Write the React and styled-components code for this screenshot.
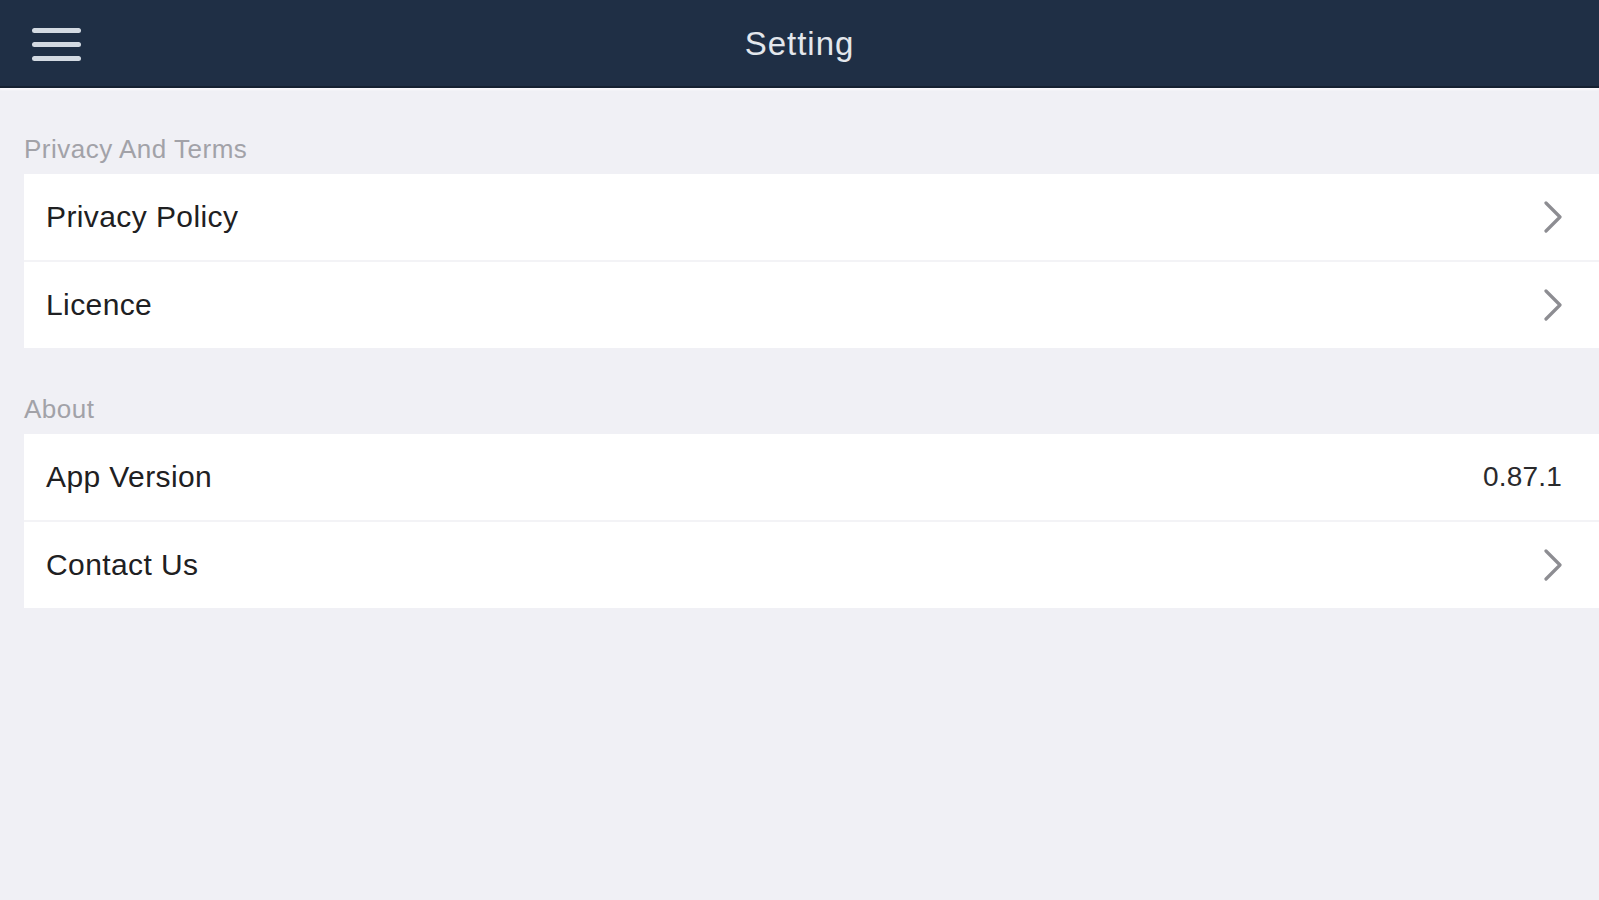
import React from "react";
import styled, { createGlobalStyle } from "styled-components";

const Global = createGlobalStyle`
  html, body { margin: 0; padding: 0; background: #f0f0f5; }
  body { font-family: "Liberation Sans", Arial, sans-serif; }
  #root { min-height: 100vh; background: #f0f0f5; }
`;

const Page = styled.div`
  width: 100%;
  min-height: 100vh;
  background: #f0f0f5;
`;

const Header = styled.header`
  height: 86px;
  background: #1f2f45;
  border-bottom: 2px solid #152131;
  box-shadow: 0 2px 2px rgba(255, 255, 255, 0.6);
  display: grid;
  grid-template-columns: 120px 1fr 120px;
  align-items: center;
`;

const MenuButton = styled.button`
  background: none;
  border: none;
  padding: 0 0 0 32px;
  margin: 0;
  display: flex;
  flex-direction: column;
  gap: 9px;
  width: 82px;
  cursor: pointer;
  margin-top: 2px;
`;

const MenuLine = styled.span`
  display: block;
  width: 49px;
  height: 5px;
  border-radius: 3px;
  background: #d3dae2;
`;

const Title = styled.h1`
  margin: 0;
  text-align: center;
  color: #e3e7ec;
  font-size: 33px;
  font-weight: 400;
  letter-spacing: 1px;
  margin-top: 2px;
`;

const SectionTitle = styled.div`
  height: 86px;
  box-sizing: border-box;
  display: flex;
  align-items: flex-end;
  padding: 0 0 13px 24px;
  color: #a2a2a8;
  font-size: 26px;
  line-height: 24px;
  letter-spacing: 0.5px;
`;

const Card = styled.div`
  margin-left: 24px;
  background: #ffffff;
  display: flex;
  flex-direction: column;
`;

const Row = styled.div`
  height: 86px;
  display: flex;
  align-items: center;
  justify-content: space-between;
  padding: 0 36px 0 22px;
  & + & {
    border-top: 2px solid #f3f3f6;
  }
`;

const Label = styled.span`
  color: #202022;
  font-size: 30px;
  letter-spacing: 0.4px;
`;

const Value = styled.span`
  color: #2a2a2c;
  font-size: 28px;
  letter-spacing: 0.2px;
  margin-right: 1px;
`;

const Chevron = () => (
  <svg width="20" height="32" viewBox="0 0 20 32" fill="none">
    <path
      d="M3 2 L17 16 L3 30"
      stroke="#8d8d92"
      strokeWidth="3.2"
      strokeLinecap="round"
      strokeLinejoin="round"
    />
  </svg>
);

const sections = [
  {
    title: "Privacy And Terms",
    rows: [{ label: "Privacy Policy" }, { label: "Licence" }],
  },
  {
    title: "About",
    rows: [{ label: "App Version", value: "0.87.1" }, { label: "Contact Us" }],
  },
];

export default function App() {
  return (
    <Page>
      <Global />
      <Header>
        <MenuButton aria-label="menu">
          <MenuLine />
          <MenuLine />
          <MenuLine />
        </MenuButton>
        <Title>Setting</Title>
        <div />
      </Header>
      {sections.map((s) => (
        <section key={s.title}>
          <SectionTitle>{s.title}</SectionTitle>
          <Card>
            {s.rows.map((r) => (
              <Row key={r.label}>
                <Label>{r.label}</Label>
                {r.value ? <Value>{r.value}</Value> : <Chevron />}
              </Row>
            ))}
          </Card>
        </section>
      ))}
    </Page>
  );
}
